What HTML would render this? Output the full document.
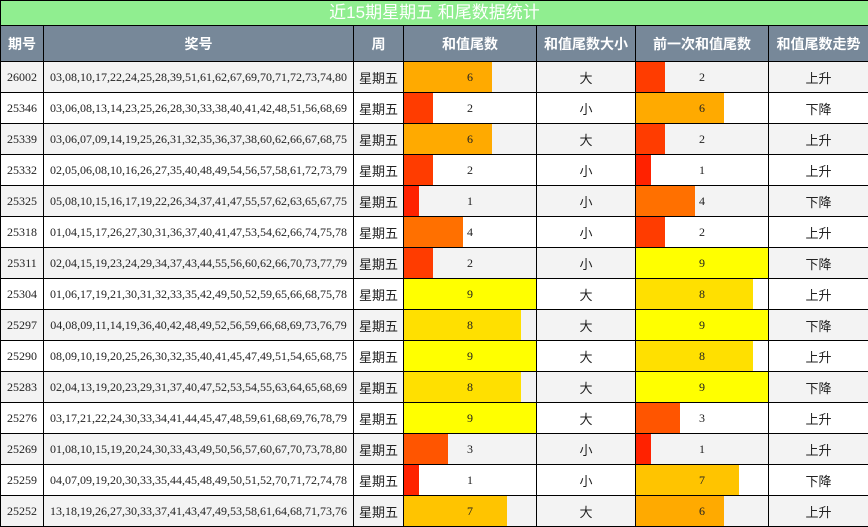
<!DOCTYPE html>
<html><head><meta charset="utf-8"><style>
body{margin:0;width:868px;height:527px;overflow:hidden;background:#fff;font-family:"Liberation Serif","Noto Serif CJK SC","Noto Sans CJK SC",serif;}
table{border-collapse:collapse;table-layout:fixed;width:868px;position:absolute;left:0;top:0;}
td,th{border:1px solid #000;padding:0;text-align:center;font-size:12px;color:#222;}
.t{height:24px;line-height:18px;background:#90ee90;color:#fff;font-size:17px;font-weight:normal;font-family:"Liberation Sans","Noto Sans CJK SC",sans-serif;}
th.h{height:35px;background:#778899;color:#fff;font-size:14px;font-weight:bold;font-family:"Liberation Sans","Noto Sans CJK SC",sans-serif;}
td{height:30px;}
tr.g td{background:#f3f3f3;}
.b{position:relative;}
.b i{position:absolute;left:0;top:0;bottom:0;}
.b span{position:relative;}
.cj{font-family:"Liberation Sans","Noto Sans CJK SC",sans-serif;font-size:13px;}
</style></head><body>
<table>
<colgroup><col style="width:43px"><col style="width:310px"><col style="width:50px"><col style="width:133px"><col style="width:99px"><col style="width:133px"><col style="width:100px"></colgroup>
<tr><th colspan="7" class="t">近15期星期五 和尾数据统计</th></tr>
<tr><th class="h">期号</th><th class="h">奖号</th><th class="h">周</th><th class="h">和值尾数</th><th class="h">和值尾数大小</th><th class="h">前一次和值尾数</th><th class="h">和值尾数走势</th></tr>
<tbody id="b"></tbody>
</table>
<script>
var d=[["26002","03,08,10,17,22,24,25,28,39,51,61,62,67,69,70,71,72,73,74,80",6,"大",2,"上升"],
["25346","03,06,08,13,14,23,25,26,28,30,33,38,40,41,42,48,51,56,68,69",2,"小",6,"下降"],
["25339","03,06,07,09,14,19,25,26,31,32,35,36,37,38,60,62,66,67,68,75",6,"大",2,"上升"],
["25332","02,05,06,08,10,16,26,27,35,40,48,49,54,56,57,58,61,72,73,79",2,"小",1,"上升"],
["25325","05,08,10,15,16,17,19,22,26,34,37,41,47,55,57,62,63,65,67,75",1,"小",4,"下降"],
["25318","01,04,15,17,26,27,30,31,36,37,40,41,47,53,54,62,66,74,75,78",4,"小",2,"上升"],
["25311","02,04,15,19,23,24,29,34,37,43,44,55,56,60,62,66,70,73,77,79",2,"小",9,"下降"],
["25304","01,06,17,19,21,30,31,32,33,35,42,49,50,52,59,65,66,68,75,78",9,"大",8,"上升"],
["25297","04,08,09,11,14,19,36,40,42,48,49,52,56,59,66,68,69,73,76,79",8,"大",9,"下降"],
["25290","08,09,10,19,20,25,26,30,32,35,40,41,45,47,49,51,54,65,68,75",9,"大",8,"上升"],
["25283","02,04,13,19,20,23,29,31,37,40,47,52,53,54,55,63,64,65,68,69",8,"大",9,"下降"],
["25276","03,17,21,22,24,30,33,34,41,44,45,47,48,59,61,68,69,76,78,79",9,"大",3,"上升"],
["25269","01,08,10,15,19,20,24,30,33,43,49,50,56,57,60,67,70,73,78,80",3,"小",1,"上升"],
["25259","04,07,09,19,20,30,33,35,44,45,48,49,50,51,52,70,71,72,74,78",1,"小",7,"下降"],
["25252","13,18,19,26,27,30,33,37,41,43,47,49,53,58,61,64,68,71,73,76",7,"大",6,"上升"]];
var c={1:"#ff2200",2:"#ff3c00",3:"#ff5500",4:"#ff7000",5:"#ff8c00",6:"#ffaa00",7:"#ffc400",8:"#ffe000",9:"#ffff00",0:"#ff0000"};
function bar(v){return '<td class="b"><i style="width:'+(v/9*100)+'%;background:'+c[v]+'"></i><span>'+v+'</span></td>';}
var h="";d.forEach(function(r,i){h+='<tr class="'+(i%2?'':'g')+'"><td>'+r[0]+'</td><td>'+r[1]+'</td><td class="cj">星期五</td>'+bar(r[2])+'<td class="cj">'+r[3]+'</td>'+bar(r[4])+'<td class="cj">'+r[5]+'</td></tr>';});
document.getElementById("b").innerHTML=h;
</script>
</body></html>
